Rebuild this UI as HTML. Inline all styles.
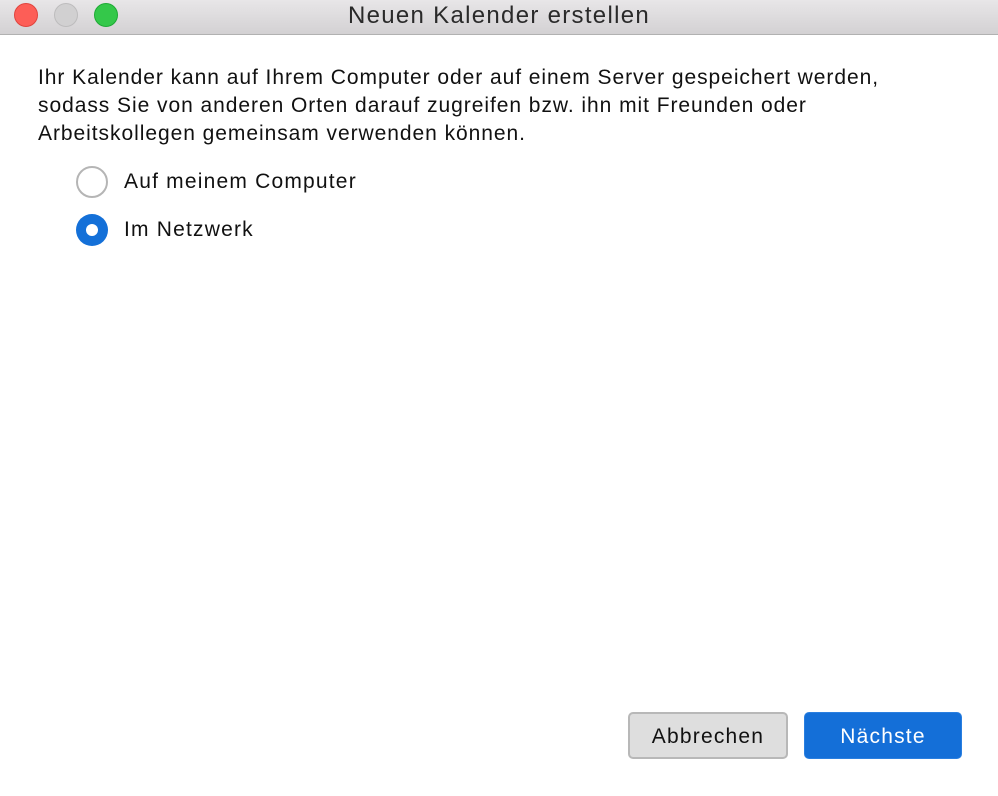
<!DOCTYPE html>
<html><head><style>
body{margin:0;width:998px;height:796px;overflow:hidden;background:#fff;font-family:"Liberation Sans",sans-serif;position:relative}
.tb{position:absolute;left:0;top:0;width:998px;height:34px;background:linear-gradient(#e8e6e8,#d3d1d3);border-bottom:1px solid #b1b1b1}
.dot{position:absolute;top:3px;width:24px;height:24px;border-radius:50%;box-sizing:border-box}
.title{position:absolute;top:2px;left:0;width:998px;text-align:center;font-size:24px;letter-spacing:1.3px;color:#2a2a2a}
.p{position:absolute;left:38px;top:64px;font-size:21px;line-height:28px;color:#111;letter-spacing:0.95px;white-space:nowrap}
.r{position:absolute;left:76px;width:32px;height:32px;border-radius:50%;box-sizing:border-box}
.rl{position:absolute;left:124px;font-size:21px;color:#111;letter-spacing:1.2px}
.b{position:absolute;top:712px;height:47px;border-radius:5px;box-sizing:border-box;font-size:21px;text-align:center;line-height:47px;letter-spacing:1.2px}
</style></head><body>
<div class="tb">
<div class="dot" style="left:14px;background:#fd5e57;border:1px solid #e0443e"></div>
<div class="dot" style="left:54px;background:#d1d0d1;border:1px solid #bdbcbd"></div>
<div class="dot" style="left:94px;background:#34c84a;border:1px solid #1eaa35"></div>
<div class="title">Neuen Kalender erstellen</div>
</div>
<div class="p">Ihr Kalender kann auf Ihrem Computer oder auf einem Server gespeichert werden,<br>sodass Sie von anderen Orten darauf zugreifen bzw. ihn mit Freunden oder<br>Arbeitskollegen gemeinsam verwenden können.</div>
<div class="r" style="top:166px;border:2px solid #b5b5b5;background:#fff"></div>
<div class="rl" style="top:170px">Auf meinem Computer</div>
<div class="r" style="top:214px;background:#1470d8"><div style="position:absolute;left:10px;top:10px;width:12px;height:12px;border-radius:50%;background:#fff"></div></div>
<div class="rl" style="top:218px">Im Netzwerk</div>
<div class="b" style="left:628px;width:160px;background:#dedede;border:2px solid #b8b8b8;color:#111;line-height:45px">Abbrechen</div>
<div class="b" style="left:804px;width:158px;background:#146fd8;border:1px solid #2a7fe0;color:#fff;line-height:47px">Nächste</div>
</body></html>
